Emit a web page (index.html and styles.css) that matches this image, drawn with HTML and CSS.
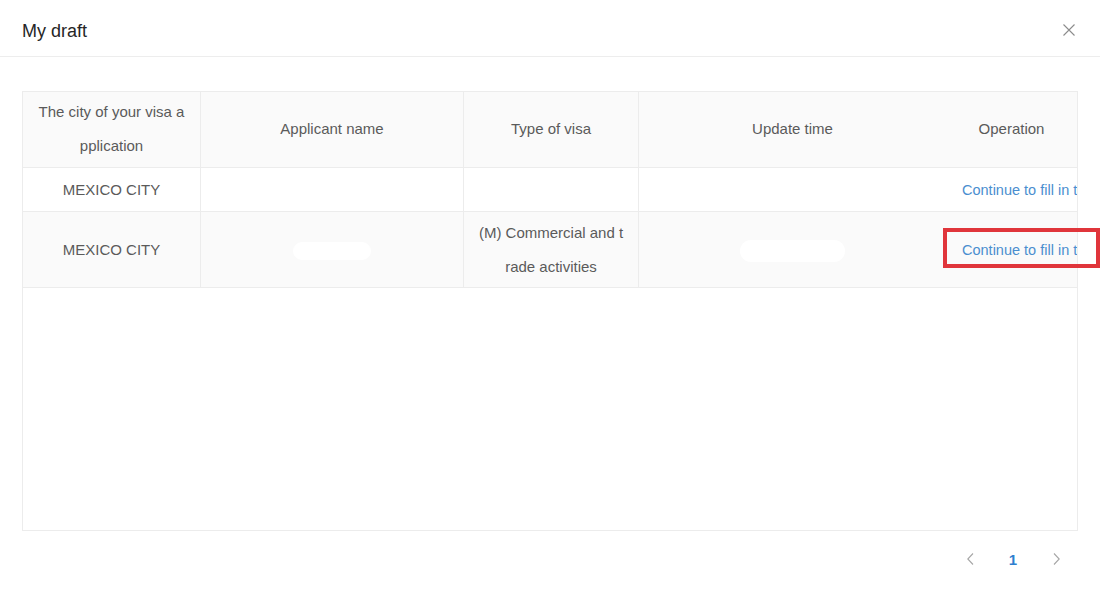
FILE: index.html
```html
<!DOCTYPE html>
<html lang="en">
<head>
  <meta charset="UTF-8">
  <meta name="viewport" content="width=device-width, initial-scale=1.0">
  <title>My draft</title>
  <link rel="stylesheet" href="styles.css">
</head>
<body>
  <div class="modal">
    <div class="modal-header">
      <h1>My draft</h1>
      <button class="close" aria-label="Close">
        <svg width="12" height="12" viewBox="0 0 12 12"><path d="M0.5 0.5 L11.5 11.5 M11.5 0.5 L0.5 11.5" stroke="#8c8c8c" stroke-width="1.1" fill="none"/></svg>
      </button>
    </div>

    <div class="modal-body">
      <div class="table-wrap">
        <table>
          <colgroup>
            <col style="width:178px">
            <col style="width:263px">
            <col style="width:175px">
            <col style="width:307px">
            <col style="width:133px">
          </colgroup>
          <thead>
            <tr>
              <th>The city of your visa application</th>
              <th>Applicant name</th>
              <th>Type of visa</th>
              <th class="last">Update time</th>
              <th class="op">Operation</th>
            </tr>
          </thead>
          <tbody>
            <tr class="single">
              <td>MEXICO CITY</td>
              <td></td>
              <td></td>
              <td class="last"></td>
              <td class="op"><a href="#">Continue to fill in t</a></td>
            </tr>
            <tr class="striped">
              <td>MEXICO CITY</td>
              <td><span class="blur name"></span></td>
              <td>(M) Commercial and trade activities</td>
              <td class="last"><span class="blur time"></span></td>
              <td class="op"><a href="#">Continue to fill in t</a></td>
            </tr>
          </tbody>
        </table>
      </div>

      <div class="pager">
        <span class="pg-arrow">
          <svg width="7" height="12" viewBox="0 0 7 12"><path d="M6 0.5 L0.8 6 L6 11.5" stroke="#a6a6a6" stroke-width="1.1" fill="none"/></svg>
        </span>
        <span class="pg-num">1</span>
        <span class="pg-arrow">
          <svg width="7" height="12" viewBox="0 0 7 12"><path d="M1 0.5 L6.2 6 L1 11.5" stroke="#a6a6a6" stroke-width="1.1" fill="none"/></svg>
        </span>
      </div>
    </div>

    <div class="highlight"></div>
  </div>
</body>
</html>
```

FILE: styles.css
```css
body {
  margin: 0;
  background: #ffffff;
  font-family: "Liberation Sans", Arial, sans-serif;
  color: #555;
}
.modal {
  position: relative;
  width: 1100px;
  height: 611px;
  background: #fff;
}
.modal-header {
  display: flex;
  justify-content: space-between;
  align-items: center;
  padding: 20px 25px 14px 22px;
  border-bottom: 1px solid #ededed;
}
.modal-header h1 {
  margin: 0;
  font-size: 18px;
  line-height: 22px;
  font-weight: normal;
  color: #262626;
}
.close {
  border: none;
  background: none;
  padding: 0;
  width: 12px;
  height: 12px;
  margin-top: -2px;
  cursor: pointer;
}
.close svg {
  display: block;
}
.modal-body {
  padding: 34px 22px 0;
}
.table-wrap {
  height: 438px;
  border: 1px solid #ececec;
  overflow: hidden;
}
table {
  table-layout: fixed;
  width: 1056px;
  border-collapse: separate;
  border-spacing: 0;
  font-size: 15px;
}
th, td {
  padding: 4px 14px 3px;
  line-height: 34px;
  text-align: center;
  font-weight: normal;
  color: #5a5a5a;
  border-right: 1px solid #ececec;
  border-bottom: 1px solid #ececec;
  word-break: break-all;
}
th {
  background: #fafafa;
  padding-top: 3px;
  padding-bottom: 4px;
}
.single td {
  padding-top: 5px;
  padding-bottom: 4px;
}
.striped td {
  background: #fafafa;
}
th.last, td.last {
  border-right: none;
}
th.op, td.op {
  border-right: none;
  padding-left: 16px;
  padding-right: 12px;
  white-space: nowrap;
  overflow: hidden;
}
th.op {
  padding-left: 10px;
}
td.op a {
  font-size: 14.5px;
  color: #4a8ecf;
  text-decoration: none;
}
.blur {
  display: inline-block;
  vertical-align: middle;
  height: 18px;
  background: #fff;
  border-radius: 9px;
}
.blur.name {
  width: 78px;
}
.blur.time {
  width: 105px;
  height: 22px;
  border-radius: 11px;
}
.pager {
  display: flex;
  justify-content: flex-end;
  align-items: center;
  gap: 11px;
  margin-top: 12px;
  margin-right: 6px;
  height: 32px;
}
.pg-arrow, .pg-num {
  width: 32px;
  height: 32px;
  display: flex;
  align-items: center;
  justify-content: center;
}
.pg-num {
  font-size: 15px;
  font-weight: bold;
  color: #2f7fcf;
}
.highlight {
  position: absolute;
  left: 943px;
  top: 228px;
  width: 149px;
  height: 32px;
  border: 4px solid #e0353b;
}
```
